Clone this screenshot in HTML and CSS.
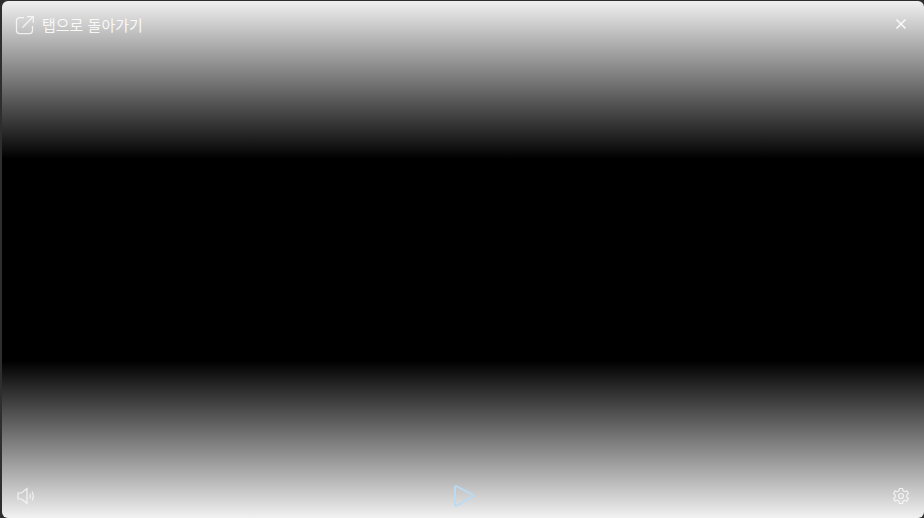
FILE: index.html
```html
<!DOCTYPE html>
<html lang="ko">
<head>
<meta charset="utf-8">
<title>PIP</title>
<link rel="stylesheet" href="styles.css">
</head>
<body>
<main class="window">
  <header class="bar top">
    <button class="tab-back">
      <svg class="icon" width="20" height="20" viewBox="0 0 20 20" fill="none" stroke="currentColor" stroke-width="1.300"><path d="M9 2.600H4.500a3 3 0 0 0-3 3v10a3 3 0 0 0 3 3h10a3 3 0 0 0 3-3V11"/><path d="M7.500 12.500 18 1.800M12 1.600h6.300v6.200"/></svg>
      <span class="label">탭으로 돌아가기</span>
    </button>
    <svg class="close" width="12" height="12" viewBox="0 0 12 12" fill="none" stroke="currentColor" stroke-width="1.500"><path d="M1.500 1.500l9 9M10.500 1.500l-9 9"/></svg>
  </header>
  <footer class="bar bottom">
    <svg class="icon" width="18" height="18" viewBox="0 0 18 18" fill="none" stroke="currentColor" stroke-width="1.200"><path d="M1 6h3.500L10 1.500v15L4.500 12H1z"/><path d="M12.800 6.500c.9 1.500.9 3.500 0 5M15 4.500c1.800 2.500 1.800 6.500 0 9"/></svg>
    <svg class="play" width="22" height="24" viewBox="0 0 22 24" fill="none" stroke="currentColor" stroke-width="1.800" stroke-linejoin="round"><path d="M2 3.500Q2 1.500 4 2.500L19 10.500Q20.500 12 19 13L4 21.500Q2 22.500 2 20.500z"/></svg>
    <svg class="icon" width="18" height="18" viewBox="0 0 18 18" fill="none" stroke="currentColor" stroke-width="1.200" stroke-linejoin="round"><circle cx="9" cy="9" r="2.500"/><path d="M7.500 1.500h3l.5 2.300 1.700.9 2.200-.8 1.500 2.600-1.700 1.600v1.800l1.700 1.600-1.500 2.600-2.200-.8-1.700.9-.5 2.300h-3l-.5-2.300-1.700-.9-2.200.8-1.500-2.600 1.700-1.600V8.100L1.600 6.500l1.500-2.600 2.200.8L7 3.800z"/></svg>
  </footer>
</main>
</body>
</html>
```
FILE: styles.css
```css
html, body {
  margin: 0;
  height: 100%;
  background: #2e2e2e;
  overflow: hidden;
}
.window {
  box-sizing: border-box;
  height: 517px;
  margin: 1px 0 0 2px;
  border-radius: 6px;
  display: flex;
  flex-direction: column;
  justify-content: space-between;
  background: linear-gradient(to bottom, #f0f0f0 0, #000 158px, #000 360px, #f0f0f0 516px);
  color: #fff;
  font-family: "Noto Sans CJK KR", "Liberation Sans", sans-serif;
}
.bar {
  display: flex;
  align-items: center;
  justify-content: space-between;
  padding: 0 14px 0 15px;
}
.top { height: 47px; padding-left: 13px; padding-right: 17px; }
.bottom { height: 44px; }
.tab-back {
  display: flex;
  align-items: center;
  gap: 7px;
  padding: 0;
  border: 0;
  background: none;
  color: inherit;
  font: inherit;
  font-size: 15px;
}
.label { opacity: .88; }
.icon { opacity: .75; }
.close { opacity: .9; margin-bottom: 2px; }
.play { color: #b8dcf5; }
```
